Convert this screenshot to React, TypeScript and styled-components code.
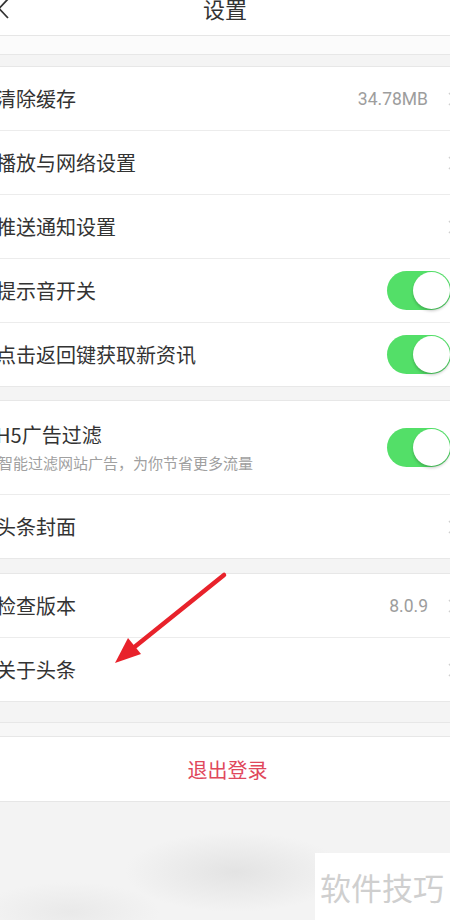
import React from "react";
import styled, { createGlobalStyle } from "styled-components";

const GlobalStyle = createGlobalStyle`
  html, body { margin: 0; padding: 0; background: #f4f4f4; }
  body { font-family: "Noto Sans CJK SC", "Noto Sans", sans-serif; overflow: hidden; }
  * { box-sizing: border-box; }
`;

const Page = styled.div`
  position: relative;
  width: 450px;
  height: 920px;
  overflow: hidden;
  background: #f3f3f3;
  display: flex;
  flex-direction: column;
`;

const Header = styled.header`
  flex: none;
  height: 36px;
  background: #fff;
  border-bottom: 1px solid #e6e6e6;
  display: flex;
  align-items: flex-start;
  justify-content: center;
  position: relative;
`;

const BackIcon = styled.svg`
  position: absolute;
  left: 0;
  top: 0;
`;

const Title = styled.h1`
  margin: -5px 0 0 0;
  font-size: 22px;
  line-height: 26px;
  font-weight: 400;
  color: #333;
`;

const Strip = styled.div<{ $h: number; $bg: string }>`
  flex: none;
  height: ${(p) => p.$h}px;
  background: ${(p) => p.$bg};
  border-bottom: 1px solid #e7e7e7;
`;

const Group = styled.section`
  flex: none;
  background: #fff;
  border-bottom: 1px solid #e8e8e8;
`;

const Row = styled.div<{ $h: number; $last?: boolean }>`
  height: ${(p) => p.$h}px;
  display: flex;
  align-items: center;
  overflow: hidden;
  border-bottom: ${(p) => (p.$last ? "none" : "1px solid #ececec")};
`;

const LabelBlock = styled.div`
  flex: 1;
  display: flex;
  flex-direction: column;
  gap: 5px;
  margin-left: -4px;
`;

const Label = styled.span`
  font-size: 20px;
  line-height: 26px;
  color: #333;
  white-space: nowrap;
`;

const SubLabel = styled.span`
  font-size: 15px;
  line-height: 20px;
  color: #a0a0a0;
  margin-left: 2px;
  white-space: nowrap;
`;

const Value = styled.span`
  font-family: Roboto, "Noto Sans", sans-serif;
  font-size: 17.5px;
  color: #9d9d9d;
`;

const Chevron = styled.svg`
  flex: none;
  margin-left: 20px;
  margin-right: -6px;
`;

const Track = styled.div`
  flex: none;
  width: 64px;
  height: 39px;
  border-radius: 20px;
  background: #53df68;
  margin-right: -1px;
  display: flex;
  align-items: center;
  justify-content: flex-end;
  padding-right: 1px;
`;

const Knob = styled.div`
  width: 37px;
  height: 37px;
  border-radius: 50%;
  background: #fff;
  box-shadow: 0 2px 3px rgba(0, 0, 0, 0.22);
`;

const LogoutRow = styled.div`
  flex: none;
  height: 65px;
  background: #fff;
  border-bottom: 1px solid #e6e6e6;
  display: flex;
  align-items: center;
  justify-content: center;
`;

const LogoutText = styled.span`
  font-size: 20px;
  color: #e0485b;
  margin-left: 5px;
`;

const Bottom = styled.div`
  flex: 1;
  background:
    radial-gradient(ellipse 110px 40px at 235px 70px, #e3e3e3, rgba(243, 243, 243, 0)),
    radial-gradient(ellipse 90px 30px at 70px 110px, #e9e9e9, rgba(243, 243, 243, 0)),
    #f3f3f3;
`;

const Watermark = styled.div`
  position: absolute;
  left: 315px;
  top: 853px;
  width: 135px;
  height: 67px;
  background: #fff;
  display: flex;
  align-items: center;
  padding-left: 5px;
  font-size: 31px;
  color: #cfcfcf;
`;

const ArrowLayer = styled.svg`
  position: absolute;
  left: 0;
  top: 0;
  pointer-events: none;
`;

const ChevronIcon = () => (
  <Chevron width="8" height="14" viewBox="0 0 8 14">
    <polyline points="1,1 7,7 1,13" fill="none" stroke="#d0d0d0" strokeWidth="1.5" />
  </Chevron>
);

const Toggle = () => (
  <Track>
    <Knob />
  </Track>
);

type Item = { label: string; value?: string; toggle?: boolean; sub?: string };

const groups: Item[][] = [
  [
    { label: "清除缓存", value: "34.78MB" },
    { label: "播放与网络设置" },
    { label: "推送通知设置" },
    { label: "提示音开关", toggle: true },
    { label: "点击返回键获取新资讯", toggle: true },
  ],
  [
    { label: "H5广告过滤", toggle: true, sub: "智能过滤网站广告，为你节省更多流量" },
    { label: "头条封面" },
  ],
  [
    { label: "检查版本", value: "8.0.9" },
    { label: "关于头条" },
  ],
];

const gapsBefore = [12, 14, 15];

export default function App() {
  return (
    <>
      <GlobalStyle />
      <Page>
        <Header>
          <BackIcon width="12" height="20" viewBox="0 0 12 20">
            <polyline points="8,-1 -1,8.5 8,18" fill="none" stroke="#333" strokeWidth="1.8" />
          </BackIcon>
          <Title>设置</Title>
        </Header>
        <Strip $h={19} $bg="#fbfbfb" />
        {groups.map((g, gi) => (
          <React.Fragment key={gi}>
            <Strip $h={gapsBefore[gi]} $bg="#f4f4f4" />
            <Group>
              {g.map((it, i) => {
                const last = i === g.length - 1;
                const h = it.sub ? 94 : last ? 63 : 64;
                return (
                  <Row key={it.label} $h={h} $last={last}>
                    <LabelBlock>
                      <Label>{it.label}</Label>
                      {it.sub && <SubLabel>{it.sub}</SubLabel>}
                    </LabelBlock>
                    {it.value && <Value>{it.value}</Value>}
                    {it.toggle ? <Toggle /> : <ChevronIcon />}
                  </Row>
                );
              })}
            </Group>
          </React.Fragment>
        ))}
        <Strip $h={21} $bg="#f4f4f4" />
        <Strip $h={14} $bg="#f7f7f7" />
        <LogoutRow>
          <LogoutText>退出登录</LogoutText>
        </LogoutRow>
        <Bottom />
        <Watermark>软件技巧</Watermark>
        <ArrowLayer width="450" height="920" viewBox="0 0 450 920">
          <line x1="224" y1="575" x2="132" y2="649" stroke="#e8222b" strokeWidth="4.5" strokeLinecap="round" />
          <polygon points="115,663 141,654 128,638" fill="#e8222b" />
        </ArrowLayer>
      </Page>
    </>
  );
}
